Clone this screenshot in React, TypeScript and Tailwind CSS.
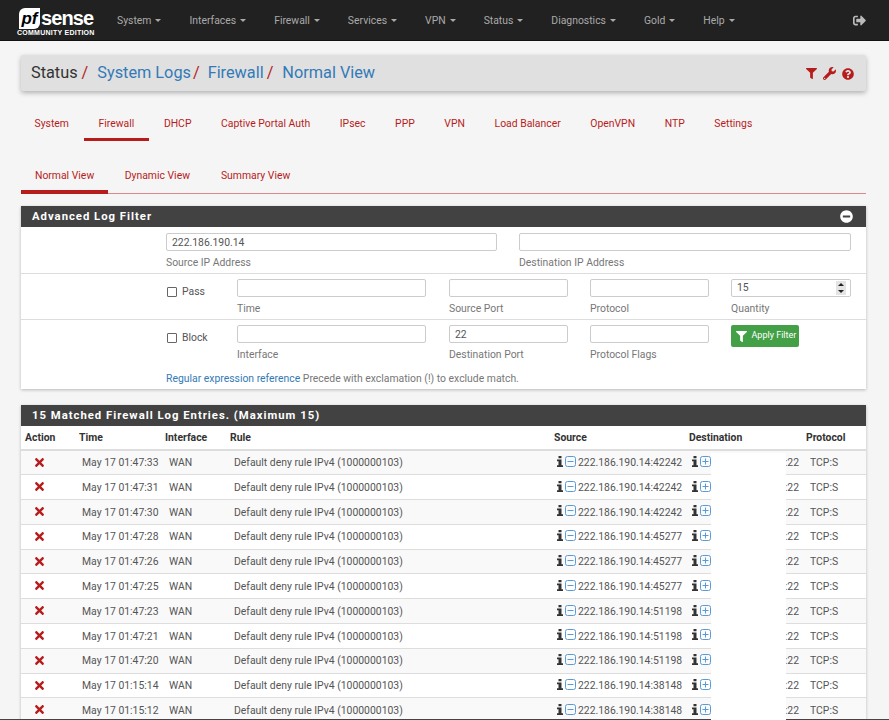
import { FaFilter, FaWrench, FaQuestionCircle, FaTimes, FaSignOutAlt, FaMinusCircle } from "react-icons/fa";

const menu = ["System", "Interfaces", "Firewall", "Services", "VPN", "Status", "Diagnostics", "Gold", "Help"];
const tabs = ["System", "Firewall", "DHCP", "Captive Portal Auth", "IPsec", "PPP", "VPN", "Load Balancer", "OpenVPN", "NTP", "Settings"];
const views = ["Normal View", "Dynamic View", "Summary View"];

const rows = [
  ["May 17 01:47:33", "42242"],
  ["May 17 01:47:31", "42242"],
  ["May 17 01:47:30", "42242"],
  ["May 17 01:47:28", "45277"],
  ["May 17 01:47:26", "45277"],
  ["May 17 01:47:25", "45277"],
  ["May 17 01:47:23", "51198"],
  ["May 17 01:47:21", "51198"],
  ["May 17 01:47:20", "51198"],
  ["May 17 01:15:14", "38148"],
  ["May 17 01:15:12", "38148"],
];

function Field({ label, value, className }: { label: string; value?: string; className: string }) {
  return (
    <div className={className}>
      <input
        readOnly
        value={value ?? ""}
        className="block h-[18px] w-full rounded-[2px] border border-[#ccc] bg-white px-[5px] text-[10.4px] text-[#555] outline-none"
      />
      <div className="mt-[3.5px] h-[15px] text-[10.4px] leading-[15px] text-[#777]">{label}</div>
    </div>
  );
}

function Check({ label }: { label: string }) {
  return (
    <div className="flex w-[70px] items-center self-start pt-[6px] text-[10.4px] leading-[14px] text-[#555]">
      <span className="mr-[5px] h-[10px] w-[10px] rounded-[1px] border border-[#666] bg-white" />
      {label}
    </div>
  );
}

function Heading({ children }: { children: React.ReactNode }) {
  return (
    <div className="flex h-[21px] items-center justify-between bg-[#424242] pt-px pr-[12px] pl-[11px] text-[11.3px] font-bold tracking-[1px] text-white">
      <span>{children}</span>
    </div>
  );
}

function InfoIcon() {
  return (
    <svg viewBox="0 0 6 11" className="-mt-[3px] h-[11px] w-[6px] shrink-0 text-[#333]" fill="currentColor">
      <path d="M1.5 0h3v2.2h-3z M0 3.5h4.5v5.7H6V11H0V9.2h1.5V5.3H0z" />
    </svg>
  );
}

function BoxIcon({ plus }: { plus?: boolean }) {
  return (
    <svg viewBox="0 0 11 11" className="-mt-[3px] h-[11px] w-[11px] shrink-0 text-[#5a9bd5]" fill="none" stroke="currentColor">
      <rect x="0.5" y="0.5" width="10" height="10" rx="2" />
      <path d="M2.5 5.5h6" />
      {plus && <path d="M5.5 2.5v6" />}
    </svg>
  );
}

export default function App() {
  return (
    <div className="relative h-screen w-full overflow-hidden bg-[#f5f5f5] font-['Roboto',sans-serif]">
      <header className="flex h-[41px] items-center border-b border-[#111] bg-[#212121]">
        <div className="ml-[17px] w-[100px] shrink-0 self-start pt-[7px]">
          <div className="flex h-[22px] items-center">
            <span className="mr-[1px] ml-[2px] flex h-[21px] w-[21px] items-center justify-center rounded-tl-[6px] rounded-br-[6px] bg-white font-['Liberation_Sans',sans-serif] text-[17px] leading-none font-bold text-black italic">
              pf
            </span>
            <span className="font-['Liberation_Sans',sans-serif] text-[20px] leading-none font-bold tracking-[-0.9px] text-white">sense</span>
          </div>
          <div className="font-['Liberation_Sans',sans-serif] text-[7px] leading-[8px] font-bold tracking-[0.25px] whitespace-nowrap text-white">COMMUNITY EDITION</div>
        </div>
        <nav className="flex gap-[28px] pt-px text-[10.4px] text-[#aaa]">
          {menu.map((m) => (
            <span key={m} className="flex items-center whitespace-nowrap">
              {m}
              <span className="ml-[4px] h-0 w-0 border-x-[3px] border-t-[3px] border-x-transparent border-t-[#aaa]" />
            </span>
          ))}
        </nav>
        <FaSignOutAlt className="absolute top-[13.5px] left-[853px] text-[#bbb]" size={13} />
      </header>

      <main className="pr-[23px] pl-[21px]">
        <div className="mt-[14px] flex h-[36px] items-center justify-between rounded-[2px] bg-[#e0e0e0] pr-[12px] pl-[10px] text-[16.3px] shadow-[0_2px_5px_rgba(0,0,0,0.28)]">
          <div className="flex items-center pt-px whitespace-nowrap">
            <span className="text-[#333]">Status</span>
            <span className="mr-[9px] ml-[4px] text-[#b71c1c]">/</span>
            <span className="text-[#337ab7]">System Logs</span>
            <span className="mr-[8px] ml-[2px] text-[#b71c1c]">/</span>
            <span className="text-[#337ab7]">Firewall</span>
            <span className="mr-[9px] ml-[3px] text-[#b71c1c]">/</span>
            <span className="text-[#337ab7]">Normal View</span>
          </div>
          <div className="flex items-center gap-[6px] pt-px text-[#b71c1c]">
            <FaFilter size={11} />
            <FaWrench size={13} />
            <FaQuestionCircle size={12} />
          </div>
        </div>

        <nav className="mt-[21px] -ml-[1.3px] flex h-[29px] text-[10.4px] text-[#b71c1c]">
          {tabs.map((t) => (
            <span key={t} className={"whitespace-nowrap px-[14.8px] pt-[4px] " + (t === "Firewall" ? "border-b-[3px] border-[#b71c1c]" : "")}>
              {t}
            </span>
          ))}
        </nav>

        <nav className="mt-[19px] flex h-[34px] border-b border-[#dd8888] text-[10.4px] text-[#b71c1c]">
          {views.map((t) =>
            t === "Normal View" ? (
              <span key={t} className="-mb-px border-b-[4px] border-[#b71c1c] px-[14px] pt-[8px] whitespace-nowrap">{t}</span>
            ) : (
              <span key={t} className="pt-[8px] pr-[14.5px] pl-[16.5px] whitespace-nowrap">{t}</span>
            ),
          )}
        </nav>

        <section className="mt-[12px] bg-white shadow-[0_1px_3px_rgba(0,0,0,0.25)]">
          <div className="relative">
            <Heading>Advanced Log Filter</Heading>
            <FaMinusCircle className="absolute top-[4px] right-[13px] text-white" size={13} />
          </div>
          <div className="flex h-[47px] border-b border-[#ddd] pt-[6px] pl-[145px]">
            <Field className="w-[331px]" label="Source IP Address" value="222.186.190.14" />
            <Field className="ml-[22px] w-[332px]" label="Destination IP Address" />
          </div>
          <div className="flex h-[46px] border-b border-[#ddd] pt-[5px] pl-[146px]">
            <Check label="Pass" />
            <Field className="w-[189px]" label="Time" />
            <Field className="ml-[23px] w-[119px]" label="Source Port" />
            <Field className="ml-[22px] w-[119px]" label="Protocol" />
            <div className="ml-[22px] w-[120px]">
              <div className="flex h-[18px] items-center justify-between rounded-[2px] border border-[#ccc] pr-[4px] pl-[5px] text-[10.4px] text-[#555]">
                15
                <span className="flex h-[14px] w-[10px] flex-col items-center justify-around bg-[#e4e4e4]">
                  <span className="h-0 w-0 border-x-[3px] border-b-[3px] border-x-transparent border-b-[#222]" />
                  <span className="h-0 w-0 border-x-[3px] border-t-[3px] border-x-transparent border-t-[#222]" />
                </span>
              </div>
              <div className="mt-[3.5px] text-[10.4px] leading-[15px] text-[#777]">Quantity</div>
            </div>
          </div>
          <div className="flex h-[46px] pt-[5px] pl-[146px]">
            <Check label="Block" />
            <Field className="w-[189px]" label="Interface" />
            <Field className="ml-[23px] w-[119px]" label="Destination Port" value="22" />
            <Field className="ml-[22px] w-[119px]" label="Protocol Flags" />
            <button className="ml-[22px] flex h-[22px] w-[68px] items-center rounded-[2px] bg-[#43a047] pl-[4px] text-[9px] whitespace-nowrap text-white">
              <FaFilter className="mr-[5px] ml-[0.5px] shrink-0" size={11} />
              Apply Filter
            </button>
          </div>
          <div className="h-[23px] pt-[5.5px] pl-[145px] text-[10.4px] leading-[13px] text-[#777]">
            <span className="text-[#337ab7]">Regular expression reference</span> Precede with exclamation (!) to exclude match.
          </div>
        </section>

        <section className="mt-[16px] bg-white shadow-[0_1px_3px_rgba(0,0,0,0.25)]">
          <Heading>15 Matched Firewall Log Entries. (Maximum 15)</Heading>
          <table className="w-full table-fixed text-[10.4px] text-[#555]">
            <colgroup>
              <col className="w-[54px]" />
              <col className="w-[86px]" />
              <col className="w-[65px]" />
              <col className="w-[324px]" />
              <col className="w-[135px]" />
              <col className="w-[117px]" />
              <col />
            </colgroup>
            <thead>
              <tr className="h-[24px] border-b-2 border-[#ddd] text-left text-[#333]">
                {["Action", "Time", "Interface", "Rule", "Source", "Destination", "Protocol"].map((h) => (
                  <th key={h} className="pt-px pl-[4px] font-bold">{h}</th>
                ))}
              </tr>
            </thead>
            <tbody>
              {rows.map(([time, port], i) => (
                <tr key={i} className={"h-[24.8px] border-b border-[#ddd] " + (i % 2 === 0 ? "bg-[#f9f9f9]" : "bg-white")}>
                  <td className="pl-[12px] text-[#b71c1c]"><FaTimes className="-mt-px" size={13} /></td>
                  <td className="pt-px pl-[7px] whitespace-nowrap">{time}</td>
                  <td className="pt-px pl-[8px]">WAN</td>
                  <td className="pt-px pl-[8px] whitespace-nowrap">Default deny rule IPv4 (1000000103)</td>
                  <td className="pt-px pl-[7px] whitespace-nowrap">
                    <div className="flex items-center">
                      <InfoIcon />
                      <span className="ml-[2px]"><BoxIcon /></span>
                      <span className="ml-[2px]">222.186.190.14:{port}</span>
                    </div>
                  </td>
                  <td className="pt-px pl-[7px]">
                    <div className="flex items-center justify-between pr-[3px]">
                      <span className="flex items-center">
                        <InfoIcon />
                        <span className="ml-[2px]"><BoxIcon plus /></span>
                      </span>
                      <span>:22</span>
                    </div>
                  </td>
                  <td className="pt-px pl-[8px]">TCP:S</td>
                </tr>
              ))}
            </tbody>
          </table>
        </section>
      </main>
      <div className="absolute inset-x-0 bottom-0 h-px bg-[#444]" />
      <div className="absolute top-[453px] left-[711px] h-[267px] w-[75px] bg-white" />
    </div>
  );
}
